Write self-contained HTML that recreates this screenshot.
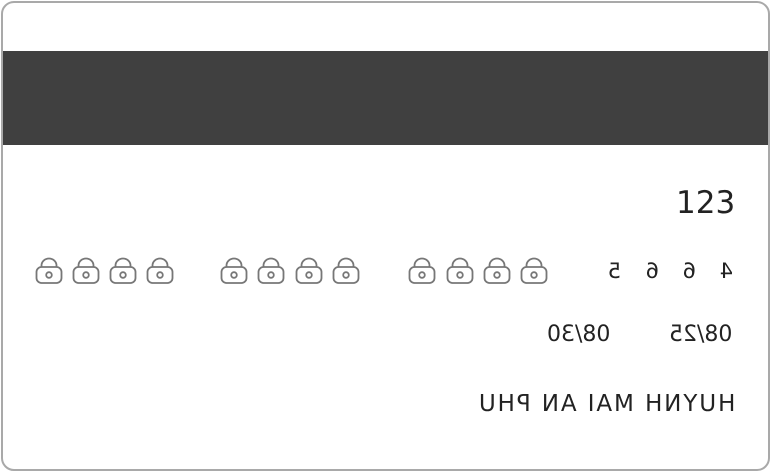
<!DOCTYPE html>
<html><head><meta charset="utf-8"><style>
html,body{margin:0;padding:0;background:#fff;}
.card{position:absolute;left:1px;top:1px;width:765px;height:466px;border:2px solid #a9a9a9;border-radius:13px;background:#fff;overflow:hidden;}
.bar{position:absolute;left:0;top:48px;width:100%;height:94px;background:#404040;}
.t{position:absolute;font-family:"DejaVu Sans","Liberation Sans",sans-serif;color:#222;white-space:nowrap;line-height:1;}
.m{transform:scaleX(-1);}
</style></head><body>
<div class="card"><div class="bar"></div></div>
<div class="t" style="left:676px;top:188px;font-size:31px;">123</div>

<div class="t m" style="left:603px;top:261px;font-size:21px;width:130px;height:22px;">
<span style="position:absolute;left:0">4</span><span style="position:absolute;left:37px">6</span><span style="position:absolute;left:74px">6</span><span style="position:absolute;left:112px">5</span></div>

<div class="t m" style="left:669px;top:324px;font-size:22px;">08/25</div>
<div class="t m" style="left:547px;top:324px;font-size:22px;">08/30</div>
<div class="t m" style="left:477px;top:393px;font-size:23px;letter-spacing:1.9px;">HUYNH MAI AN PHU</div>

<svg width="771" height="472" style="position:absolute;left:0;top:0" fill="none" stroke="#777" stroke-width="1.8">
<defs><g id="lk"><path d="M5.5 9 V7.5 A7.5 7 0 0 1 20.5 7.5 V9"/><rect x="0.5" y="9" width="25" height="16" rx="5"/><circle cx="13" cy="17" r="2.8"/></g></defs>
<use href="#lk" x="36" y="258"/><use href="#lk" x="73" y="258"/><use href="#lk" x="110" y="258"/><use href="#lk" x="147" y="258"/>
<use href="#lk" x="221" y="258"/><use href="#lk" x="258" y="258"/><use href="#lk" x="296" y="258"/><use href="#lk" x="333" y="258"/>
<use href="#lk" x="409" y="258"/><use href="#lk" x="447" y="258"/><use href="#lk" x="484" y="258"/><use href="#lk" x="521" y="258"/>
</svg>
</body></html>
